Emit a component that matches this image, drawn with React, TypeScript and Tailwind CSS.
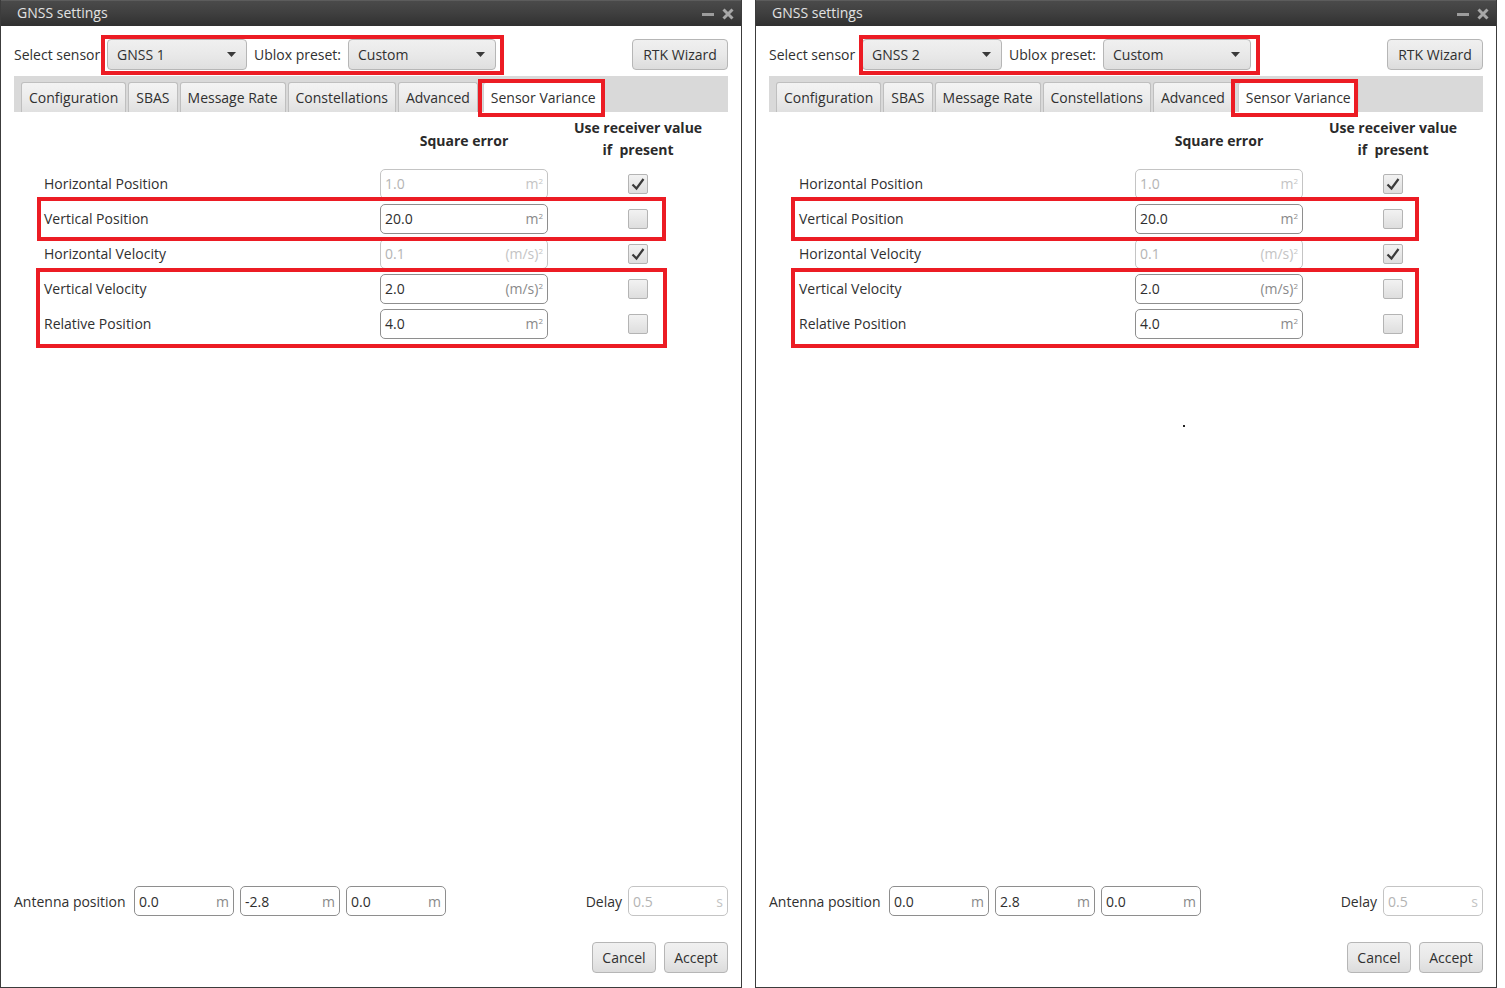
import React from "react";

type Unit = "m2" | "ms2" | "m" | "s";

function UnitLabel({ unit }: { unit: Unit }) {
  if (unit === "m") return <span>m</span>;
  if (unit === "s") return <span>s</span>;
  if (unit === "m2")
    return (
      <span>
        m<span className="relative -top-[5px] text-[8px]">2</span>
      </span>
    );
  return (
    <span>
      (m/s)<span className="relative -top-[5px] text-[8px]">2</span>
    </span>
  );
}

function NumField({
  value,
  unit,
  disabled,
  className,
}: {
  value: string;
  unit: Unit;
  disabled?: boolean;
  className: string;
}) {
  return (
    <div
      className={`flex h-[30px] items-center justify-between rounded-[5px] border bg-white pl-[4px] pr-[4px] ${
        disabled ? "border-[#c4c4c4] text-[#b4b4b4]" : "border-[#8e8e8e] text-[#2e2e2e]"
      } ${className}`}
    >
      <span>{value}</span>
      <span className={disabled ? "text-[#c4c4c4]" : "text-[#8a8a8a]"}>
        <UnitLabel unit={unit} />
      </span>
    </div>
  );
}

function Combo({ value, className }: { value: string; className: string }) {
  return (
    <div
      className={`flex h-[31px] items-center justify-between rounded-[4px] border border-[#b6b6b6] bg-gradient-to-b from-[#f0f0f0] via-[#e9e9e9] to-[#dfdfdf] pb-[1px] pl-[9px] pr-[10px] ${className}`}
    >
      <span>{value}</span>
      <svg width="9" height="5" viewBox="0 0 9 5">
        <path d="M0 0 L9 0 L4.5 5 Z" fill="#3a3a3a" />
      </svg>
    </div>
  );
}

function Button({ label, className }: { label: string; className: string }) {
  return (
    <div
      className={`flex h-[31px] items-center justify-center rounded-[4px] border border-[#b6b6b6] bg-gradient-to-b from-[#f0f0f0] via-[#e9e9e9] to-[#dcdcdc] pb-[1px] ${className}`}
    >
      {label}
    </div>
  );
}

function CheckBox({ checked }: { checked: boolean }) {
  return (
    <div className="flex h-[20px] w-[20px] items-center justify-center rounded-[2px] border border-[#b4b4b4] bg-gradient-to-b from-[#f2f2f2] to-[#dedede]">
      {checked && (
        <svg width="16" height="16" viewBox="0 0 16 16">
          <path d="M2.5 8.5 L6.5 12.5 L13.5 3" fill="none" stroke="#3a3a3a" strokeWidth="2.2" />
        </svg>
      )}
    </div>
  );
}

const tabs = ["Configuration", "SBAS", "Message Rate", "Constellations", "Advanced", "Sensor Variance"];

const rows: { label: string; value: string; unit: Unit; receiver: boolean }[] = [
  { label: "Horizontal Position", value: "1.0", unit: "m2", receiver: true },
  { label: "Vertical Position", value: "20.0", unit: "m2", receiver: false },
  { label: "Horizontal Velocity", value: "0.1", unit: "ms2", receiver: true },
  { label: "Vertical Velocity", value: "2.0", unit: "ms2", receiver: false },
  { label: "Relative Position", value: "4.0", unit: "m2", receiver: false },
];

function Highlight({ className }: { className: string }) {
  return <div className={`pointer-events-none absolute border-[4px] border-[#ec1c24] ${className}`} />;
}

function SettingsWindow({
  sensor,
  antennaY,
  sensorBox,
  tabBox,
  rowBox,
  groupBox,
  showDot,
}: {
  sensor: string;
  antennaY: string;
  sensorBox: string;
  tabBox: string;
  rowBox: string;
  groupBox: string;
  showDot?: boolean;
}) {
  return (
    <div className="relative flex h-[988px] w-[742px] shrink-0 flex-col border-x border-b border-[#3c3c3c] bg-white">
      {/* title bar */}
      <div className="flex h-[26px] shrink-0 items-center justify-between border-t border-[#5c5c5c] bg-gradient-to-b from-[#4a4a4a] via-[#3f3f3f] to-[#303030] pb-[3px] pl-[16px] pr-[7px]">
        <span className="text-[14px] text-[#e2e2e2]">GNSS settings</span>
        <div className="flex items-center gap-[8px] pt-[3px]">
          <svg width="12" height="12" viewBox="0 0 12 12">
            <rect x="0" y="5" width="12" height="3" fill="#9c9c9c" />
          </svg>
          <svg width="12" height="12" viewBox="0 0 12 12">
            <path d="M1.5 1.5 L10.5 10.5 M10.5 1.5 L1.5 10.5" stroke="#a8a8a8" strokeWidth="3" />
          </svg>
        </div>
      </div>

      <div className="flex flex-1 flex-col px-[13px] text-[14px] text-[#303030]">
        {/* sensor selection */}
        <div className="mt-[13px] flex h-[31px] items-center">
          <span className="w-[93px] shrink-0 whitespace-nowrap">Select sensor</span>
          <Combo value={sensor} className="w-[140px]" />
          <span className="ml-[7px] w-[94px] whitespace-nowrap">Ublox preset:</span>
          <Combo value="Custom" className="w-[148px]" />
          <div className="flex-1" />
          <Button label="RTK Wizard" className="w-[96px]" />
        </div>

        {/* tabs */}
        <div className="mt-[6px] flex h-[36px] items-end gap-[2px] bg-[#d9d9d9] pl-[7px]">
          {tabs.map((t) => {
            const active = t === "Sensor Variance";
            return (
              <div
                key={t}
                className={`flex h-[30px] items-center rounded-t-[3px] border border-b-0 px-[7px] pb-[1px] ${
                  active
                    ? "ml-[3px] border-[#d0d0d0] bg-white"
                    : "border-[#bfbfbf] bg-gradient-to-b from-[#f3f3f3] via-[#ececec] to-[#e0e0e0]"
                }`}
              >
                {t}
              </div>
            );
          })}
        </div>

        {/* variance table */}
        <div className="mt-[5px] grid grid-cols-[366px_168px_180px] font-bold text-[#2a2a2a]">
          <div />
          <div className="flex items-center justify-center pt-[2px]">Square error</div>
          <div className="flex flex-col items-center leading-[22px]">
            <span>Use receiver value</span>
            <span className="whitespace-pre">if  present</span>
          </div>
        </div>

        <div className="mt-[5px] flex flex-col">
          {rows.map((r) => (
            <div key={r.label} className="grid h-[35px] grid-cols-[366px_168px_180px] items-center">
              <span className="pl-[30px]">{r.label}</span>
              <NumField value={r.value} unit={r.unit} disabled={r.receiver} className="w-[168px]" />
              <div className="flex justify-center">
                <CheckBox checked={r.receiver} />
              </div>
            </div>
          ))}
        </div>

        <div className="flex-1" />

        {/* antenna position */}
        <div className="flex h-[30px] items-center">
          <span className="w-[120px] shrink-0 whitespace-nowrap">Antenna position</span>
          <div className="flex gap-[6px]">
            <NumField value="0.0" unit="m" className="w-[100px]" />
            <NumField value={antennaY} unit="m" className="w-[100px]" />
            <NumField value="0.0" unit="m" className="w-[100px]" />
          </div>
          <div className="flex-1" />
          <span className="mr-[6px]">Delay</span>
          <NumField value="0.5" unit="s" disabled className="w-[100px]" />
        </div>

        <div className="mb-[14px] mt-[26px] flex justify-end gap-[8px]">
          <Button label="Cancel" className="w-[64px]" />
          <Button label="Accept" className="w-[64px]" />
        </div>
      </div>

      <Highlight className={sensorBox} />
      <Highlight className={tabBox} />
      <Highlight className={rowBox} />
      <Highlight className={groupBox} />
      {showDot && <div className="absolute left-[427px] top-[425px] h-[2px] w-[2px] bg-[#222]" />}
    </div>
  );
}

export default function App() {
  return (
    <div className="flex h-[988px] w-[1505px] gap-[13px] overflow-hidden bg-white font-['Open_Sans',sans-serif]">
      <SettingsWindow
        sensor="GNSS 1"
        antennaY="-2.8"
        sensorBox="left-[100px] top-[35px] h-[40px] w-[403px]"
        tabBox="left-[477px] top-[79px] h-[38px] w-[127px]"
        rowBox="left-[36px] top-[197px] h-[44px] w-[629px]"
        groupBox="left-[35px] top-[268px] h-[80px] w-[631px]"
      />
      <SettingsWindow
        sensor="GNSS 2"
        antennaY="2.8"
        sensorBox="left-[103px] top-[35px] h-[40px] w-[401px]"
        tabBox="left-[475px] top-[79px] h-[38px] w-[127px]"
        rowBox="left-[35px] top-[197px] h-[44px] w-[628px]"
        groupBox="left-[35px] top-[268px] h-[80px] w-[628px]"
        showDot
      />
    </div>
  );
}
